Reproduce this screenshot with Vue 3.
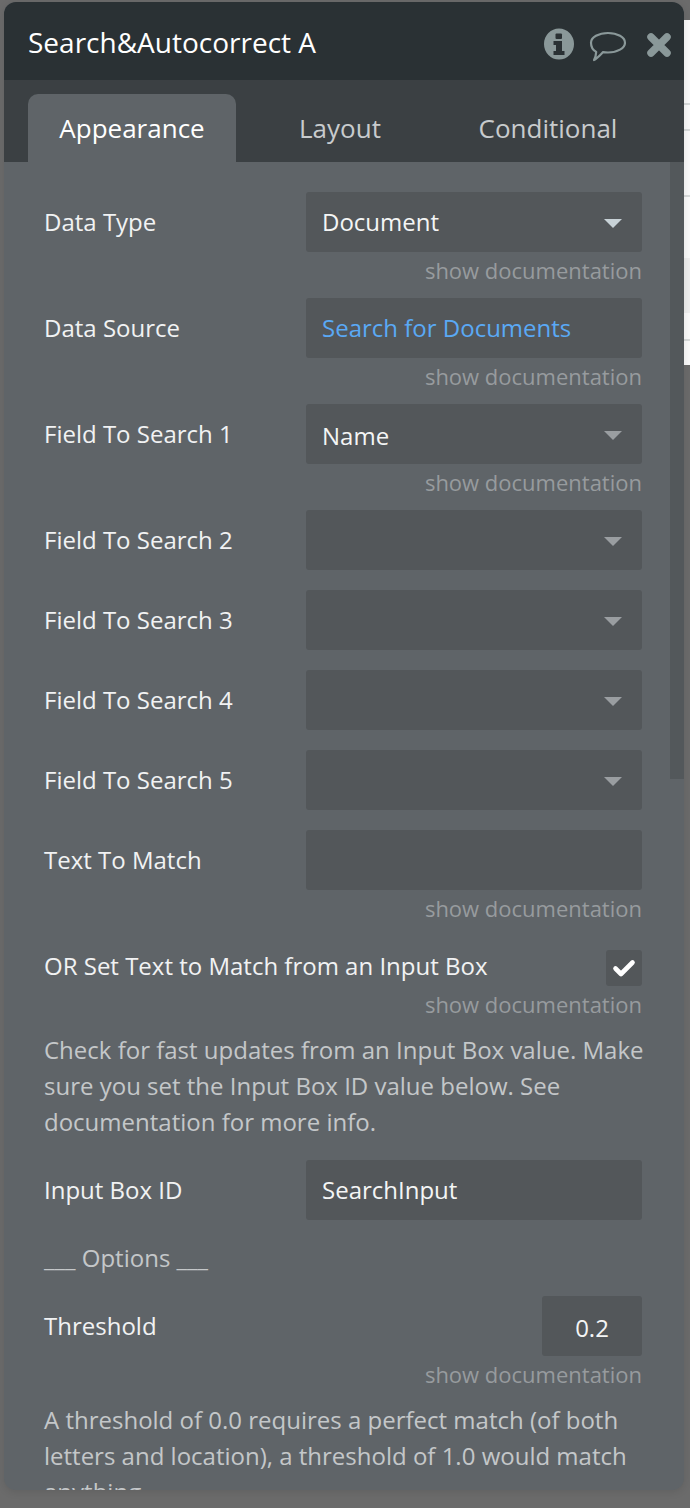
<script setup>
const caret = 'caret'
const showDoc = 'show documentation'
const searchFields = [2, 3, 4, 5]
</script>

<template>
  <div class="page">
    <section class="panel">
      <header class="head">
        <h1 class="title">Search&amp;Autocorrect A</h1>
        <div class="head-icons">
          <svg class="ic-info" width="32" height="32" viewBox="0 0 32 32">
            <ellipse cx="16" cy="16" rx="15" ry="15.5" fill="#8a9899" />
            <rect x="12.5" y="5.5" width="6.5" height="5.5" rx="1" fill="#2a3134" />
            <path d="M10.5 13h8.5v10h2.5v4H10.5v-4h2.500v-6h-2.500z" fill="#2a3134" />
          </svg>
          <svg class="ic-chat" width="38" height="40" viewBox="0 0 38 40">
            <path d="M19 10C28.400 10 36 14.200 36 19.700S28.400 29.500 19 29.500c-1.800 0-3.500-.1-5-.4-2.500 2.500-6 6.500-9 8 1.300-2 2-5 2.200-8.200C3.800 27 2 23.500 2 19.700 2 14.200 9.600 10 19 10z" fill="none" stroke="#8a9899" stroke-width="2.200" stroke-linejoin="round" />
          </svg>
          <svg class="ic-close" width="26" height="26" viewBox="0 0 26 26">
            <path d="M5 5l16 16M21 5L5 21" stroke="#8a9899" stroke-width="7.500" stroke-linecap="round" />
          </svg>
        </div>
      </header>

      <nav class="tabs">
        <div class="tab active">Appearance</div>
        <div class="tab">Layout</div>
        <div class="tab">Conditional</div>
      </nav>

      <div class="body">
        <div class="content">
          <div class="row">
            <label class="label">Data Type</label>
            <div class="field">Document<span :class="[caret, 'bright']"></span></div>
          </div>
          <div class="doc">{{ showDoc }}</div>

          <div class="row">
            <label class="label">Data Source</label>
            <div class="field link">Search for Documents</div>
          </div>
          <div class="doc">{{ showDoc }}</div>

          <div class="row">
            <label class="label">Field To Search 1</label>
            <div class="field low">Name<span :class="caret"></span></div>
          </div>
          <div class="doc">{{ showDoc }}</div>

          <div v-for="n in searchFields" :key="n" class="row spaced">
            <label class="label">Field To Search {{ n }}</label>
            <div class="field"><span :class="caret"></span></div>
          </div>

          <div class="row">
            <label class="label">Text To Match</label>
            <div class="field"></div>
          </div>
          <div class="doc extra">{{ showDoc }}</div>

          <div class="row check-row">
            <label class="label">OR Set Text to Match from an Input Box</label>
            <div class="check">
              <svg width="24" height="20" viewBox="0 0 24 20">
                <path d="M3.500 10.500l5.500 5.500L20.500 4.500" fill="none" stroke="#fff" stroke-width="4.600" stroke-linecap="round" stroke-linejoin="round" />
              </svg>
            </div>
          </div>
          <div class="doc">{{ showDoc }}</div>

          <p class="para">Check for fast updates from an Input Box value. Make sure you set the Input Box ID value below. See documentation for more info.</p>

          <div class="row spaced">
            <label class="label">Input Box ID</label>
            <div class="field">SearchInput</div>
          </div>

          <div class="options">___ Options ___</div>

          <div class="row">
            <label class="label">Threshold</label>
            <div class="field small low">0.2</div>
          </div>
          <div class="doc">{{ showDoc }}</div>

          <p class="para">A threshold of 0.0 requires a perfect match (of both letters and location), a threshold of 1.0 would match anything.</p>
        </div>
        <div class="scrollbar"></div>
      </div>
    </section>

    <aside class="strip">
      <div class="seg s1"></div>
      <div class="seg s2"></div>
      <div class="seg s3"></div>
      <div class="seg s4"></div>
      <div class="seg s5"></div>
      <div class="seg s6"></div>
      <div class="seg s7"></div>
    </aside>
  </div>
</template>

<style>
html, body { margin: 0; background: #6b6b6b; overflow: hidden; }
</style>

<style scoped>
.page {
  display: flex;
  align-items: flex-start;
  width: 690px;
  height: 1508px;
  overflow: hidden;
  background: #6b6b6b;
  font-family: "Open Sans", "Noto Sans", sans-serif;
}
.panel {
  position: relative;
  z-index: 1;
  flex: none;
  display: flex;
  flex-direction: column;
  width: 680px;
  height: 1488px;
  margin: 2px 0 0 4px;
  border-radius: 12px;
  overflow: hidden;
  background: #5f6468;
  box-shadow: 0 2px 8px rgba(0, 0, 0, 0.1);
}
.head {
  flex: none;
  display: flex;
  align-items: center;
  justify-content: space-between;
  height: 78px;
  padding: 4px 12px 0 24px;
  box-sizing: border-box;
  background: #2a3134;
}
.title {
  margin: 0 0 2px;
  font-size: 28px;
  font-weight: 400;
  color: #fff;
}
.head-icons { display: flex; align-items: center; }
.ic-info { margin: 2px 14px 0 0; }
.ic-chat { margin-right: 19px; }
.ic-close { margin-top: 4px; }
.tabs {
  flex: none;
  display: flex;
  align-items: flex-end;
  height: 82px;
  padding-left: 24px;
  box-sizing: border-box;
  background: #3b4043;
}
.tab {
  width: 208px;
  height: 68px;
  line-height: 68px;
  text-align: center;
  font-size: 26px;
  color: #c8cbcd;
}
.tab.active {
  background: #5f6468;
  border-radius: 10px 10px 0 0;
  color: #fff;
}
.body {
  position: relative;
  flex: 1;
  overflow: hidden;
}
.content {
  padding: 30px 42px 0 40px;
}
.row {
  display: flex;
  align-items: center;
  justify-content: space-between;
  height: 60px;
}
.row.spaced { margin-bottom: 20px; }
.check-row { height: 36px; }
.label {
  padding-bottom: 2px;
  font-size: 24px;
  color: #f1f2f3;
}
.check-row .label { padding-bottom: 6px; }
.field {
  position: relative;
  width: 336px;
  height: 60px;
  line-height: 60px;
  padding-left: 16px;
  box-sizing: border-box;
  background: #53575a;
  border-radius: 3px;
  font-size: 24px;
  color: #f4f5f5;
}
.field.low { line-height: 64px; }
.field.link { color: #5aa9f5; }
.field.small {
  width: 100px;
  padding: 0;
  text-align: center;
}
.caret {
  position: absolute;
  top: 27px;
  right: 20px;
  width: 0;
  height: 0;
  border-left: 9px solid transparent;
  border-right: 9px solid transparent;
  border-top: 9px solid #9a9ea1;
}
.caret.bright { border-top-color: #c8d2d7; }
.doc {
  height: 26px;
  margin-bottom: 20px;
  line-height: 36px;
  text-align: right;
  font-size: 22px;
  color: #979b9e;
}
.doc.extra { margin-bottom: 34px; }
.check {
  display: flex;
  align-items: center;
  justify-content: center;
  width: 36px;
  height: 36px;
  background: #53575a;
  border-radius: 3px;
}
.para {
  margin: 1px -3px 20px 0;
  font-size: 24px;
  line-height: 36px;
  color: #c4c7c9;
}
.options {
  height: 36px;
  margin: 1px 0 20px;
  line-height: 36px;
  font-size: 24px;
  color: #c4c7c9;
}
.scrollbar {
  position: absolute;
  top: 0;
  right: 0;
  width: 14px;
  height: 617px;
  background: #53585b;
}
.strip {
  flex: none;
  width: 6px;
  margin-top: 20px;
  display: flex;
  flex-direction: column;
}
.seg { background: #fafafa; }
.s1 { height: 83px; border-bottom: 2px solid #d9dcdc; }
.s2 { height: 24px; border-bottom: 2px solid #d9dcdc; }
.s3 { height: 64px; border-bottom: 2px solid #d9dcdc; }
.s4 { height: 61px; }
.s5 { height: 55px; background: #efefef; }
.s6 { height: 26px; border-bottom: 2px solid #d9dcdc; }
.s7 { height: 24px; }
</style>
